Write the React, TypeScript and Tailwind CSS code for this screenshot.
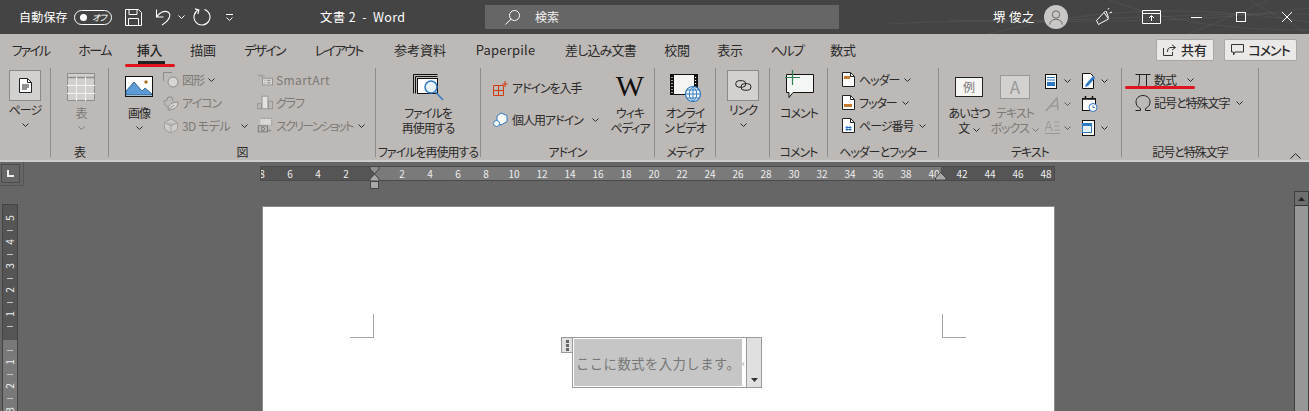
import React from "react";

const FONT = "font-['Noto_Sans_CJK_JP','Noto_Sans',sans-serif]";
const PALT = "[font-feature-settings:'palt']";

function Chevron({ className = "" }: { className?: string }) {
  return (
    <svg width="7" height="4" viewBox="0 0 7 4" className={`inline-block shrink-0 ${className}`}>
      <polyline points="0.5,0.5 3.5,3.5 6.5,0.5" fill="none" stroke="currentColor" strokeWidth="1" />
    </svg>
  );
}

function Group({ width, label, children }: { width: string; label?: string; children: React.ReactNode }) {
  return (
    <div className={`${width} h-[89px] shrink-0 border-r border-[#8f8c8a] flex flex-col`}>
      <div className="h-[79px] flex">{children}</div>
      <div className="h-[10px] flex items-center justify-center text-[12px] tracking-[-1px] text-[#2a2a2a] whitespace-nowrap">
        {label}
      </div>
    </div>
  );
}

function Large({ width, icon, lines, chevron, disabled, iconH = "h-[37px]" }: {
  width: string; icon: React.ReactNode; lines: React.ReactNode[]; chevron?: boolean; disabled?: boolean; iconH?: string;
}) {
  return (
    <div className={`${width} flex flex-col items-center ${disabled ? "text-[#7c7976]" : "text-[#2a2a2a]"}`}>
      <div className={`${iconH} flex items-center justify-center`}>{icon}</div>
      {lines.map((l, i) => (
        <div key={i} className="h-[15px] leading-[15px] text-[12px] tracking-[-1px] whitespace-nowrap">{l}</div>
      ))}
      {chevron && <div className="h-[15px] flex items-center"><Chevron /></div>}
    </div>
  );
}

function Small({ icon, text, gap, disabled, chevron = true, tight }: {
  icon: React.ReactNode; text: string; gap?: string; disabled?: boolean; chevron?: boolean; tight?: string;
}) {
  return (
    <div className={`h-[23px] flex items-center whitespace-nowrap text-[12px] ${tight ?? "tracking-[-1px]"} ${disabled ? "text-[#7c7976]" : "text-[#2a2a2a]"}`}>
      <div className="w-[16px] h-[18px] flex items-center justify-center shrink-0">{icon}</div>
      <span className="ml-[3px]">{text}</span>
      {chevron && <Chevron className={`${gap ?? "ml-[5px]"} text-[#2a2a2a]`} />}
    </div>
  );
}

function PageGlyph({ mark }: { mark?: string }) {
  return (
    <svg width="13" height="15" viewBox="0 0 13 15">
      <path d="M.5.5h8l4 4v10H.5z" fill="#fff" stroke="#222" />
      <path d="M8.5.5v4h4" fill="none" stroke="#222" />
      {mark === "header" && <rect x="2" y="4" width="6" height="3" fill="#c67c2e" />}
      {mark === "footer" && <rect x="2" y="9" width="8" height="3" fill="#c67c2e" />}
      {mark === "lines" && <path d="M3 7h7M3 9h7M3 11h5" stroke="#222" fill="none" />}
      {mark === "num" && <path d="M5 8v5M8 8v5M3.500 9.500h6M3.500 11.500h6" stroke="#2b6fc4" fill="none" />}
    </svg>
  );
}

function TitleBar() {
  return (
    <div className="relative h-[34px] bg-[#444444] flex items-center text-white overflow-hidden">
      {/* faint Office background lines */}
      <svg className="absolute right-0 top-0" width="420" height="34" viewBox="0 0 420 34">
        <g stroke="#ffffff" strokeOpacity="0.06" fill="none">
          <path d="M0 24C120 16 260 30 420 8M100 34C200 8 300 4 420 22M220 0C280 22 340 30 420 30M300 34L380 0M60 20C180 24 300 12 420 14M360 0L420 34" />
        </g>
      </svg>
      <span className="ml-[19px] text-[12px] tracking-[0.2px] w-[48px] whitespace-nowrap">自動保存</span>
      <div className="ml-[7px] w-[38px] h-[15px] rounded-full border border-white flex items-center">
        <span className="ml-[5px] w-[7px] h-[7px] rounded-full bg-white" />
        <span className="ml-[5px] text-[9px] leading-none tracking-[-1px] italic">オフ</span>
      </div>
      <svg className="ml-[13px]" width="17" height="17" viewBox="0 0 17 17">
        <path d="M.5.5h13l3 3v13H.5zM4 .5v5h8v-5M3.500 16.500v-7h10v7" fill="none" stroke="#fff" />
      </svg>
      <svg className="ml-[13px]" width="18" height="18" viewBox="0 0 18 18">
        <path d="M1.500 1.500V9h7M1.500 9C4 5 9 2 13 4c3.500 2.500 2 8-6 13" fill="none" stroke="#fff" strokeWidth="1.100" />
      </svg>
      <Chevron className="ml-[5px]" />
      <svg className="ml-[8px]" width="18" height="18" viewBox="0 0 18 18">
        <path d="M5.500 1.800A8 8 0 1 0 11.500 1.400M2 .9L6 2 4.800 6" fill="none" stroke="#fff" strokeWidth="1.100" />
      </svg>
      <div className="ml-[15px] flex flex-col items-center gap-[2px]">
        <span className="w-[7px] h-[1px] bg-white" />
        <Chevron />
      </div>
      <span className="ml-[87px] w-[90px] text-[12.5px] tracking-[0.3px] whitespace-nowrap">文書 2 &nbsp;-&nbsp; Word</span>
      <div className="ml-[75px] w-[354px] h-[24px] bg-[#666666] flex items-center">
        <svg className="ml-[20px]" width="15" height="15" viewBox="0 0 15 15">
          <circle cx="9.500" cy="5.500" r="5" fill="none" stroke="#fff" />
          <path d="M6 9.200L.5 14.500" stroke="#fff" />
        </svg>
        <span className="ml-[15px] text-[12px] text-[#f0f0f0]">検索</span>
      </div>
      <span className="ml-[154px] w-[41px] text-[12.5px] tracking-[0.3px] whitespace-nowrap">堺 俊之</span>
      <div className="relative ml-[10px] w-[24px] h-[24px] rounded-full bg-[#c9c7c6] flex items-center justify-center">
        <svg width="14" height="15" viewBox="0 0 14 15">
          <circle cx="7" cy="4.500" r="3.700" fill="none" stroke="#6a6a6a" />
          <path d="M.7 14.500c0-7 12.600-7 12.600 0" fill="none" stroke="#6a6a6a" />
        </svg>
      </div>
      <svg className="ml-[27px]" width="18" height="18" viewBox="0 0 18 18">
        <path d="M1.500 12.500L9 4.500l4.500 6.500-7.500 4-2.500 1.500zM9 4.500l1.500-1.500M11 3l2.500 6.500M13 1.500L14 0M14.500 5L17 4" fill="none" stroke="#fff" />
      </svg>
      <svg className="ml-[29px]" width="19" height="14" viewBox="0 0 19 14">
        <path d="M.5.5h18v13H.5zM.5 3.500h18M9.500 11V6M7 8l2.500-2.500L12 8" fill="none" stroke="#fff" />
      </svg>
      <span className="ml-[30px] w-[11px] h-[1px] bg-white" />
      <span className="ml-[34px] w-[10px] h-[10px] border border-white" />
      <svg className="ml-[36px]" width="10" height="10" viewBox="0 0 10 10">
        <path d="M0 0l10 10M10 0L0 10" stroke="#fff" />
      </svg>
    </div>
  );
}

const TABS = [
  { name: "ファイル", width: "w-[37px]", gap: "ml-[12px]", track: "tracking-[-1.900px]" },
  { name: "ホーム", width: "w-[33px]", gap: "ml-[29px]", track: "tracking-[-1.500px]" },
  { name: "挿入", width: "w-[27px]", gap: "ml-[25px]", track: "tracking-[-0.300px]" },
  { name: "描画", width: "w-[26px]", gap: "ml-[27px]", track: "tracking-[-0.300px]" },
  { name: "デザイン", width: "w-[41px]", gap: "ml-[28px]", track: "tracking-[-1.800px]" },
  { name: "レイアウト", width: "w-[49px]", gap: "ml-[29px]", track: "tracking-[-1.800px]" },
  { name: "参考資料", width: "w-[52px]", gap: "ml-[31px]", track: "tracking-[0px]" },
  { name: "Paperpile", width: "w-[59px]", gap: "ml-[30px]", track: "tracking-[0.200px]" },
  { name: "差し込み文書", width: "w-[73px]", gap: "ml-[29px]", track: "tracking-[-0.800px]" },
  { name: "校閲", width: "w-[26px]", gap: "ml-[27px]", track: "tracking-[-0.300px]" },
  { name: "表示", width: "w-[26px]", gap: "ml-[27px]", track: "tracking-[-0.300px]" },
  { name: "ヘルプ", width: "w-[32px]", gap: "ml-[28px]", track: "tracking-[-1.500px]" },
  { name: "数式", width: "w-[26px]", gap: "ml-[27px]", track: "tracking-[-0.300px]" },
];

function TabRow() {
  return (
    <div className="relative h-[32px] flex items-center text-[13px] text-[#2a2a2a]">
      {TABS.map((t) => (
        <div key={t.name} className={`relative ${t.width} ${t.gap} ${t.track} shrink-0 flex justify-center whitespace-nowrap ${t.name === "挿入" ? "font-medium" : ""}`}>
          {t.name}
          {t.name === "挿入" && <span className="absolute left-[2px] w-[27px] top-[21px] h-[3px] bg-[#222222]" />}
          {t.name === "挿入" && <span className="absolute left-[-11px] w-[50px] top-[24px] h-[3px] rounded-full bg-[#e0141c]" />}
        </div>
      ))}
      <div className="ml-auto mr-[12px] flex items-center gap-[10px]">
        <div className="w-[58px] h-[22px] bg-[#ebe9e8] border border-[#a9a6a4] rounded-[2px] flex items-center justify-center gap-[5px] font-medium">
          <svg width="13" height="12" viewBox="0 0 13 12">
            <path d="M9 .8l3.500 2.700L9 6.200M12 3.500H8C5.500 3.500 4.500 5 4.500 8M.5 4v7.500h9V8" fill="none" stroke="#333" />
          </svg>
          <span>共有</span>
        </div>
        <div className="w-[73px] h-[22px] bg-[#ebe9e8] border border-[#a9a6a4] rounded-[2px] flex items-center justify-center gap-[4px] font-medium tracking-[-1px]">
          <svg width="13" height="12" viewBox="0 0 13 12">
            <path d="M.5.5h12v7.500H4L2.500 11V8H.5z" fill="none" stroke="#333" />
          </svg>
          <span>コメント</span>
        </div>
      </div>
    </div>
  );
}

function Ribbon() {
  return (
    <div className="relative h-[96px] pt-[2px] flex items-start">
      <Group width="w-[51px]">
        <div className="ml-[9px] w-[32px]">
          <Large
            width="w-[32px]"
            iconH="h-[34px]"
            icon={
              <div className="w-[32px] h-[31px] bg-[#d3d1cf] border border-[#8c8a88] flex items-center justify-center">
                <PageGlyph mark="lines" />
              </div>
            }
            lines={["ページ"]}
            chevron
          />
        </div>
      </Group>

      <Group width="w-[58px]" label="表">
        <div className="ml-[5px]">
          <Large
            width="w-[50px]"
            disabled
            icon={
              <svg width="28" height="28" viewBox="0 0 28 28">
                <path d="M.5.5h27v27H.5z" fill="#d2d0ce" stroke="#8e8c8a" />
                <path d="M.5 4.500h27" stroke="#8e8c8a" strokeWidth="1.500" />
                <path d="M9.500 4v24M18.500 4v24M0 12.500h28M0 20.500h28" stroke="#f3f2f1" />
              </svg>
            }
            lines={["表"]}
            chevron
          />
        </div>
      </Group>

      <Group width="w-[267px]" label="図">
        <div className="ml-[11px] w-[38px]">
          <Large
            width="w-[38px]"
            icon={
              <svg width="28" height="21" viewBox="0 0 28 21">
                <rect x=".5" y=".5" width="27" height="20" fill="#fff" stroke="#111" />
                <path d="M1 19V15L9 6l8 9 3-3 7 6v1z" fill="#5c9bd5" stroke="#25557f" strokeWidth=".8" />
                <circle cx="21" cy="6" r="1.700" fill="#a9721f" />
              </svg>
            }
            lines={["画像"]}
            chevron
          />
        </div>
        <div className="ml-[5px] w-[94px]">
          <Small disabled text="図形" gap="ml-[4px]" icon={
            <svg width="16" height="16" viewBox="0 0 16 16"><path d="M.5 9V.5H9" fill="none" stroke="#8e8c8a" /><circle cx="10" cy="10" r="5" fill="#d8d6d4" stroke="#8e8c8a" /></svg>
          } />
          <Small disabled text="アイコン" chevron={false} icon={
            <svg width="16" height="16" viewBox="0 0 16 16"><path d="M1 6l3-1 1-3 4 0 1 4M1 6c0 4 2 5 4 6" fill="none" stroke="#8e8c8a" /><path d="M5 15c0-5 4-8 10-8 0 5-4 8-10 8zM5 15l6-5" fill="#d8d6d4" stroke="#8e8c8a" /></svg>
          } />
          <Small disabled text="3D モデル" gap="ml-[11px]" tight="tracking-[-0.600px]" icon={
            <svg width="16" height="16" viewBox="0 0 16 16"><path d="M8 1l6.500 3.500v7L8 15l-6.500-3.500v-7zM1.500 4.500L8 8l6.500-3.500M8 8v7" fill="#cfcdcb" stroke="#a09e9c" /></svg>
          } />
        </div>
        <div className="w-[110px]">
          <Small disabled text="SmartArt" chevron={false} tight="tracking-[0.400px]" icon={
            <svg width="17" height="13" viewBox="0 0 19 14"><path d="M0 1h7l3 3H3z" fill="#a6a4a2" /><rect x="6.500" y="5.500" width="12" height="8" fill="#d8d6d4" stroke="#8e8c8a" /><path d="M9 8h1M12 8h4M9 11h1M12 11h4" stroke="#777" /></svg>
          } />
          <Small disabled text="グラフ" chevron={false} tight="tracking-[-1.200px]" icon={
            <svg width="17" height="15" viewBox="0 0 19 16"><path d="M.5 9.500h5v6h-5zM13.500 6.500h5v9h-5z" fill="#bbb9b7" stroke="#8e8c8a" /><path d="M6 .5h7v15H6z" fill="#e3e2e0" stroke="#8e8c8a" /></svg>
          } />
          <Small disabled text="スクリーンショット" gap="ml-[5px]" tight="tracking-[-1.700px]" icon={
            <svg width="17" height="17" viewBox="0 0 19 18"><rect x="4" y="1" width="13" height="7" fill="#dad8d6" /><path d="M4.500.5h13v9" fill="none" stroke="#8e8c8a" strokeDasharray="2 1" /><rect x="1.500" y="9.500" width="11" height="7" fill="none" stroke="#6f6d6b" /><circle cx="7" cy="13" r="2" fill="none" stroke="#6f6d6b" /><path d="M15 13v4M13 15h4" stroke="#8e8c8a" /></svg>
          } />
        </div>
      </Group>

      <Group width="w-[105px]" label="ファイルを再使用する">
        <div className="ml-[14px]">
          <Large
            width="w-[76px]"
            icon={
              <svg width="31" height="27" viewBox="0 0 31 27" className="mt-[2px]">
                <path d="M.5 19.500V.5h24M2.500 19.500V2.500h22" fill="none" stroke="#111" />
                <rect x="4.500" y="4.500" width="20" height="15" fill="#fff" stroke="#111" />
                <circle cx="18" cy="13" r="6" fill="#e8f2fb" stroke="#2f79c3" strokeWidth="1.500" />
                <path d="M22.500 18L30 26" stroke="#2f79c3" strokeWidth="1.500" />
              </svg>
            }
            lines={["ファイルを", "再使用する"]}
          />
        </div>
      </Group>

      <Group width="w-[174px]" label="アドイン">
        <div className="ml-[12px] pt-[4px] w-[110px]">
          <div className="h-[32px] flex items-center text-[12px] tracking-[-1.100px] text-[#2a2a2a] whitespace-nowrap">
            <svg width="15" height="15" viewBox="0 0 15 15">
              <path d="M.5 4.500h10v10H.5zM5.500 4.500v10M.5 9.500h10M12 0v6M9.500 3h5" fill="none" stroke="#d13b10" />
            </svg>
            <span className="ml-[4px]">アドインを入手</span>
          </div>
          <div className="h-[32px] flex items-center text-[12px] tracking-[-1px] text-[#2a2a2a] whitespace-nowrap">
            <svg width="16" height="16" viewBox="0 0 16 16">
              <path d="M8 1l6 2.500v6L8 13 4 10V4z" fill="#fff" stroke="#2f79c3" />
              <circle cx="3.500" cy="11.500" r="3" fill="#fff" stroke="#2f79c3" />
            </svg>
            <span className="ml-[3px]">個人用アドイン</span>
            <Chevron className="ml-[9px]" />
          </div>
        </div>
        <div className="ml-[5px]">
          <Large
            width="w-[44px]"
            icon={<span className="-mt-[2px] font-['Liberation_Serif',serif] text-[30px] leading-none text-[#111111] tracking-normal">W</span>}
            lines={["ウィキ", "ペディア"]}
          />
        </div>
      </Group>

      <Group width="w-[61px]" label="メディア">
        <div className="ml-[3px]">
          <Large
            width="w-[54px]"
            icon={
              <svg width="31" height="28" viewBox="0 0 31 28" className="mt-[3px]">
                <rect x=".5" y=".5" width="27" height="20" fill="#f5f5f3" stroke="#111" />
                <path d="M1 1h3v20H1zM24 1h3v20h-3z" fill="#111" />
                <path d="M2 3v1M2 6v1M2 9v1M2 12v1M2 15v1M2 18v1M25.500 3v1M25.500 6v1M25.500 9v1" stroke="#fff" strokeWidth="1.200" />
                <circle cx="23" cy="20" r="7.500" fill="#fff" stroke="#2f79c3" strokeWidth="1.200" />
                <path d="M15.500 20h15M23 12.500v15M17 16h12M17 24h12M23 12.500c-5 4-5 11 0 15M23 12.500c5 4 5 11 0 15" fill="none" stroke="#2f79c3" />
              </svg>
            }
            lines={["オンライ", "ン ビデオ"]}
          />
        </div>
      </Group>

      <Group width="w-[54px]">
        <div className="ml-[11px]">
          <Large
            width="w-[32px]"
            iconH="h-[34px]"
            icon={
              <div className="w-[32px] h-[31px] bg-[#d3d1cf] border border-[#8c8a88] flex items-center justify-center">
                <svg width="17" height="11" viewBox="0 0 17 11">
                  <rect x=".7" y=".7" width="10" height="6.500" rx="3.200" fill="none" stroke="#222" />
                  <rect x="6" y="3.700" width="10" height="6.500" rx="3.200" fill="none" stroke="#222" />
                </svg>
              </div>
            }
            lines={["リンク"]}
            chevron
          />
        </div>
      </Group>

      <Group width="w-[58px]" label="コメント">
        <div className="ml-[4px]">
          <Large
            width="w-[50px]"
            icon={
              <svg width="30" height="29" viewBox="0 0 30 29" className="-mt-[4px]">
                <path d="M2.500 4.500h27v18H9l-4 5v-5H2.500z" fill="#f4f6f5" stroke="#111" />
                <path d="M8.500 0v15M1 7.500h15" stroke="#2f7f4f" strokeWidth="1.200" />
              </svg>
            }
            lines={["コメント"]}
          />
        </div>
      </Group>

      <Group width="w-[111px]" label="ヘッダーとフッター">
        <div className="ml-[12px]">
          <Small text="ヘッダー" icon={<PageGlyph mark="header" />} />
          <Small text="フッター" icon={<PageGlyph mark="footer" />} />
          <Small text="ページ番号" icon={<PageGlyph mark="num" />} />
        </div>
      </Group>

      <Group width="w-[183px]" label="テキスト">
        <div className="ml-[7px] flex">
          <Large
            width="w-[46px]"
            icon={
              <div className="w-[28px] h-[20px] bg-[#f5f5f3] border border-[#222222] flex items-center justify-center text-[12px] text-[#7c7976]">例</div>
            }
            lines={["あいさつ", <>文 <Chevron className="ml-[2px] align-middle" /></>]}
          />
          <Large
            width="w-[46px]"
            disabled
            icon={
              <div className="w-[30px] h-[24px] bg-[#d3d1cf] border border-[#9b9997] flex items-center justify-center text-[17px] text-[#9b9997]">A</div>
            }
            lines={["テキスト", <>ボックス <Chevron className="ml-[2px] align-middle" /></>]}
          />
        </div>
        <div className="ml-[7px] w-[37px] pt-[2px]">
          <div className="h-[22px] flex items-center gap-[7px] text-[#2a2a2a]">
            <svg width="12" height="15" viewBox="0 0 12 15"><rect x=".5" y=".5" width="11" height="14" fill="#fff" stroke="#111" /><path d="M2 3.500h8M2 6h8" stroke="#2f79c3" /><rect x="2" y="8" width="8" height="4" fill="#2f79c3" /></svg>
            <Chevron />
          </div>
          <div className="h-[24px] flex items-center gap-[7px] text-[#5c5a58]">
            <svg width="14" height="15" viewBox="0 0 14 15"><path d="M1 14L12 1l1 12M4 9h9" fill="none" stroke="#9a9896" strokeWidth="1.500" /></svg>
            <Chevron className="-ml-[2px]" />
          </div>
          <div className="h-[23px] flex items-center gap-[7px] text-[#5c5a58]">
            <svg width="15" height="15" viewBox="0 0 15 15"><path d="M0 11L3.500 1 7 11M1.200 7.500h4.600M9.500 2h5M9.500 6h5M9.500 10h5M0 13.500h15" fill="none" stroke="#9a9896" /></svg>
            <Chevron className="-ml-[3px]" />
          </div>
        </div>
        <div className="w-[30px] pt-[2px] text-[#2a2a2a]">
          <div className="h-[22px] flex items-center gap-[5px]">
            <svg width="14" height="16" viewBox="0 0 14 16"><path d="M.5.5h8l3 3v12h-11z" fill="#fff" stroke="#111" /><path d="M4 11L11 3l2 2-7 8-3 1z" fill="#2f79c3" /></svg>
            <Chevron />
          </div>
          <div className="h-[24px] flex items-center">
            <svg width="16" height="16" viewBox="0 0 16 16"><rect x=".5" y="2.500" width="13" height="12" fill="#fff" stroke="#111" /><path d="M1 3h13M3.500 0v3M10.500 0v3" stroke="#111" strokeWidth="1.500" /><circle cx="11" cy="11.500" r="4" fill="#fff" stroke="#2f79c3" /><path d="M11 9.500v2h2" fill="none" stroke="#2f79c3" /></svg>
          </div>
          <div className="h-[23px] flex items-center gap-[5px]">
            <svg width="14" height="16" viewBox="0 0 14 16"><rect x=".5" y=".5" width="12" height="15" fill="#fff" stroke="#111" /><rect x=".5" y="3.500" width="9" height="9" fill="#e8f2fb" stroke="#2f79c3" /><path d="M1 5h8" stroke="#2f79c3" strokeWidth="2" /></svg>
            <Chevron />
          </div>
        </div>
      </Group>

      <Group width="w-[137px]" label="記号と特殊文字">
        <div className="ml-[13px]">
          <Small text="数式" gap="ml-[11px]" icon={
            <svg width="16" height="14" viewBox="0 0 16 14"><path d="M.5 1.500h15M4.500 1.500C4.500 6 4.500 10 3.500 13.500M11.500 1.500V13.500" fill="none" stroke="#222" /></svg>
          } />
          <Small text="記号と特殊文字" gap="ml-[6px]" icon={
            <svg width="16" height="16" viewBox="0 0 16 16"><path d="M.5 15.500h5v-2C2.500 12 1 9.800 1 7c0-3.800 3-6.500 7-6.500S15 3.200 15 7c0 2.800-1.500 5-4.500 6.500v2h5" fill="none" stroke="#222" /></svg>
          } />
        </div>
      </Group>

      <span className="absolute left-[1125px] top-[20px] w-[70px] h-[3px] rounded-full bg-[#e0141c]" />
      <svg className="absolute right-[8px] top-[87px]" width="11" height="6" viewBox="0 0 11 6">
        <polyline points="0.500,5.500 5.500,0.700 10.500,5.500" fill="none" stroke="#222" />
      </svg>
    </div>
  );
}

const H_RULER = ["8", "6", "4", "2", "", "2", "4", "6", "8", "10", "12", "14", "16", "18", "20", "22", "24", "26", "28", "30", "32", "34", "36", "38", "40", "42", "44", "46", "48"];
const V_RULER_TOP = ["5", "", "4", "", "3", "", "2", "", "1", ""];
const V_RULER_BOTTOM = ["", "1", "", "2", "", "3"];

function VRulerCell({ v }: { v: string }) {
  return (
    <div className="h-[12px] flex items-center justify-center">
      {v ? <span className="-rotate-90 text-[10px] leading-none text-[#eeeeee]">{v}</span> : <span className="w-[6px] h-[1px] bg-[#c5c5c5]" />}
    </div>
  );
}

function VRuler() {
  return (
    <div className="ml-[2px] mt-[1px] w-[16px] h-[207px] flex flex-col overflow-hidden border-x border-t border-[#444444]">
      <div className="h-[135px] pt-[7px] bg-[#555555] shrink-0">
        {V_RULER_TOP.map((v, i) => <VRulerCell key={i} v={v} />)}
      </div>
      <div className="bg-[#797979] grow pt-[4px] overflow-hidden">
        {V_RULER_BOTTOM.map((v, i) => <VRulerCell key={i} v={v} />)}
      </div>
    </div>
  );
}

function Document() {
  return (
    <div className="relative h-[249px] bg-[#666666] overflow-hidden">
      <div className="flex">
        <div className="w-[24px] h-[24px] border-r border-b border-[#555555] flex items-start pl-[1px] pt-[2px]">
          <div className="w-[19px] h-[19px] border border-[#4c4c4c] flex items-center justify-center">
            <svg width="8" height="7" viewBox="0 0 8 7"><path d="M1 0v6h6" fill="none" stroke="#eee" strokeWidth="2" /></svg>
          </div>
        </div>
        {/* horizontal ruler */}
        <div className="ml-[236px] mt-[4px] relative w-[795px] h-[15px] bg-[#555555] border border-[#4a4a4a] overflow-hidden">
          <div className="absolute left-[114px] w-[566px] top-0 bottom-0 bg-[#7a7a7a]" />
          <div className="relative flex -ml-[13px] h-full items-center">
            {H_RULER.map((n, i) => (
              <span key={i} className="w-[28px] shrink-0 text-center text-[10px] leading-none text-[#eeeeee]">{n}</span>
            ))}
          </div>
        </div>
      </div>

      {/* ruler markers */}
      <svg className="absolute left-[369px] top-[4px]" width="12" height="24" viewBox="0 0 12 24">
        <path d="M1 .5h9V3L5.500 8 1 3z" fill="#8d8d8d" stroke="#444" />
        <path d="M5.500 8L10 13v2H1v-2z" fill="#a8a8a8" stroke="#444" />
        <rect x="1.500" y="15.500" width="8" height="7" fill="#a8a8a8" stroke="#444" />
      </svg>
      <svg className="absolute left-[935px] top-[10px]" width="12" height="9" viewBox="0 0 12 9">
        <path d="M5.500 .5L11 6v2H.5V6z" fill="#a8a8a8" stroke="#444" />
      </svg>

      <div className="absolute left-0 top-[41px]"><VRuler /></div>

      {/* page */}
      <div className="ml-[262px] mt-[20px] w-[793px] h-[300px] bg-white border-x border-t border-[#8c8c8c]">
        <div className="pl-[87px] pr-[88px] pt-[107px] flex justify-between">
          <div className="w-[24px] h-[24px] border-r border-b border-[#a6a6a6]" />
          <div className="w-[24px] h-[24px] border-l border-b border-[#a6a6a6]" />
        </div>
        <div className="ml-[298px] -mt-[1px] flex items-start">
          <div className="w-[11px] h-[16px] bg-[#e0e0e0] border border-[#9a9a9a] border-r-0 flex flex-col items-center justify-center gap-[1px]">
            <span className="w-[3px] h-[3px] bg-[#666666]" />
            <span className="w-[3px] h-[3px] bg-[#666666]" />
            <span className="w-[3px] h-[3px] bg-[#666666]" />
          </div>
          <div className="w-[190px] h-[51px] border border-[#9a9a9a] flex">
            <div className="ml-[1px] my-[1px] w-[168px] bg-[#c6c6c6] flex items-center pl-[2px] pt-[2px] text-[13.3px] tracking-[0.500px] text-[#777777] whitespace-nowrap [font-feature-settings:normal]">
              ここに数式を入力します。
            </div>
            <div className="w-[4px] flex items-center text-[9px] text-[#888888] pt-[2px]">‹</div>
            <div className="w-[15px] bg-[#e0e0e0] border-l border-[#9a9a9a] flex items-end justify-center pb-[5px]">
              <svg width="7" height="4" viewBox="0 0 7 4"><path d="M0 0h7L3.500 4z" fill="#333" /></svg>
            </div>
          </div>
        </div>
      </div>

      {/* scrollbar */}
      <div className="absolute right-0 top-[29px] bottom-0 w-[15px] bg-[#979797] border-x border-t border-[#3f3f3f]">
        <div className="h-[14px] bg-[#6e6e6e] border-b border-[#333333] flex items-center justify-center">
          <svg width="7" height="4" viewBox="0 0 7 4"><path d="M0 4h7L3.500 0z" fill="#222" /></svg>
        </div>
      </div>
    </div>
  );
}

export default function App() {
  return (
    <div className={`w-[1309px] h-[411px] overflow-hidden bg-[#666666] ${FONT} ${PALT}`}>
      <TitleBar />
      <div className="bg-[#bdb9b6] h-[128px] border-b-2 border-[#d0cdca]">
        <TabRow />
        <Ribbon />
      </div>
      <Document />
    </div>
  );
}
